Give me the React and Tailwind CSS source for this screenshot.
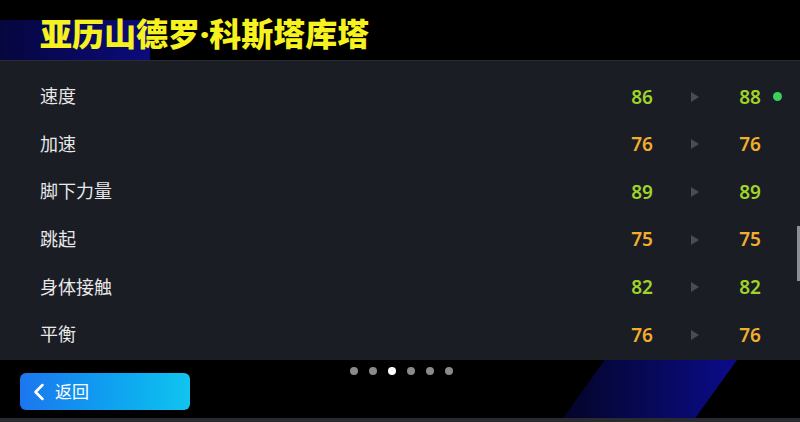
import React from "react";
import { ChevronLeft } from "lucide-react";

const stats = [
  { name: "速度", from: 86, to: 88, up: true },
  { name: "加速", from: 76, to: 76 },
  { name: "脚下力量", from: 89, to: 89 },
  { name: "跳起", from: 75, to: 75 },
  { name: "身体接触", from: 82, to: 82 },
  { name: "平衡", from: 76, to: 76 },
];

// rating colour: 80+ green, below orange
const numColor = (v) => (v >= 80 ? "text-[#9fd42b]" : "text-[#f1ad2d]");

const StatRow = ({ stat }) => (
  <div className="flex items-center h-[47.6px] pl-10 pr-[18px]">
    <div className="flex-1 text-[18px] text-[#e8e8ea]">{stat.name}</div>
    <div className={`w-[40px] text-center text-[19px] font-semibold ${numColor(stat.from)}`}>
      {stat.from}
    </div>
    <div className="w-[66px] flex justify-center">
      <div className="w-0 h-0 border-y-[5px] border-y-transparent border-l-[8px] border-l-[#4a4c54]" />
    </div>
    <div className={`w-[44px] text-center text-[19px] font-semibold ${numColor(stat.to)}`}>
      {stat.to}
    </div>
    <div className="w-[10px] flex justify-center">
      {stat.up && <div className="w-[9px] h-[9px] rounded-full bg-[#3ccf5c]" />}
    </div>
  </div>
);

const App = () => {
  return (
    <div
      className="w-[800px] h-[422px] bg-black overflow-hidden flex flex-col"
      style={{ fontFamily: '"Noto Sans", "Noto Sans CJK SC", sans-serif' }}
    >
      {/* HEADER */}
      <div className="relative h-[60px] shrink-0 bg-black">
        <div className="absolute left-0 top-[20px] w-[150px] h-[40px] bg-gradient-to-r from-[#06063f] to-[#0b0b7c]" />
        <h1 className="relative pl-10 pt-[11px] text-[32px] leading-[46px] font-black text-[#f6f21f]">
          亚历山德罗·科斯塔库塔
        </h1>
      </div>

      {/* STATS PANEL */}
      <div className="relative h-[300px] shrink-0 bg-[#1b1d24] border-t border-[#2a2c33] pt-[12px]">
        {stats.map((s) => (
          <StatRow key={s.name} stat={s} />
        ))}
        <div className="absolute right-0 top-[165px] w-[3px] h-[55px] bg-[#8e8f94]" />
      </div>

      {/* FOOTER */}
      <div className="relative flex items-start h-[58px] shrink-0 bg-black">
        <div className="absolute left-[563px] top-0 w-[174px] h-[58px] bg-gradient-to-r from-[#040428] to-[#0b0b8c] [clip-path:polygon(24%_0,100%_0,76%_100%,0_100%)]" />
        <button className="relative ml-5 mt-[13px] w-[170px] h-[37px] rounded-[6px] bg-gradient-to-r from-[#1c76ee] to-[#12c4ef] flex items-center pl-[5px] gap-[2px] text-white">
          <ChevronLeft className="w-[28px] h-[28px]" strokeWidth={2.2} />
          <span className="text-[17px]">返回</span>
        </button>
        <div className="relative ml-[160px] mt-[7px] flex gap-[11px]">
          {[0, 1, 2, 3, 4, 5].map((i) => (
            <div
              key={i}
              className={`w-[8px] h-[8px] rounded-full ${i === 2 ? "bg-white" : "bg-[#8a8a8c]"}`}
            />
          ))}
        </div>
      </div>
      <div className="h-[4px] bg-[#2a2b31]" />
    </div>
  );
};

export default App;
